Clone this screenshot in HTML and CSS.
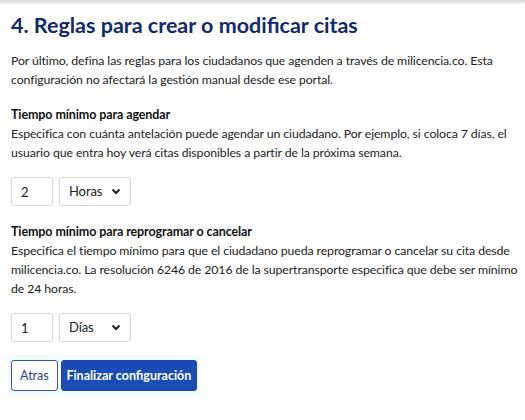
FILE: index.html
```html
<!DOCTYPE html>
<html>
	<head>
		<meta charset="UTF-8">
		<title>Reglas para citas</title>
		<link rel="stylesheet" href="styles.css">
	</head>
	<body>
		<div class="top-bar"></div>
		<div class="container">
			<h2 class="title">4. Reglas para crear o modificar citas</h2>
			<p class="intro">Por último, defina las reglas para los ciudadanos que agenden a través de milicencia.co. Esta configuración no afectará la gestión manual desde ese portal.</p>

			<div class="rule">
				<h3>Tiempo mínimo para agendar</h3>
				<p>Especifica con cuánta antelación puede agendar un ciudadano. Por ejemplo, si coloca 7 días, el usuario que entra hoy verá citas disponibles a partir de la próxima semana.</p>
				<div class="fields">
					<input type="text" class="num" value="2">
					<div class="select">
						<span>Horas</span>
						<svg width="10" height="7" viewBox="0 0 10 7"><path d="M1.5 1.5 L5 5 L8.5 1.5" fill="none" stroke="#222" stroke-width="2"/></svg>
					</div>
				</div>
			</div>

			<div class="rule">
				<h3>Tiempo mínimo para reprogramar o cancelar</h3>
				<p>Especifica el tiempo mínimo para que el ciudadano pueda reprogramar o cancelar su cita desde milicencia.co. La resolución 6246 de 2016 de la supertransporte especifica que debe ser mínimo de 24 horas.</p>
				<div class="fields">
					<input type="text" class="num" value="1">
					<div class="select">
						<span>Días</span>
						<svg width="10" height="7" viewBox="0 0 10 7"><path d="M1.5 1.5 L5 5 L8.5 1.5" fill="none" stroke="#222" stroke-width="2"/></svg>
					</div>
				</div>
			</div>

			<div class="actions">
				<button class="btn btn-back">Atras</button>
				<button class="btn btn-finish">Finalizar configuración</button>
			</div>
		</div>
	</body>
</html>
```

FILE: styles.css
```css
* {
	margin: 0;
	padding: 0;
	box-sizing: border-box;
}
body {
	background-color: #fff;
	font-family: "Lato", "Liberation Sans", sans-serif;
	color: #222;
}
.top-bar {
	height: 4px;
	background: linear-gradient(#d8d8d8, #f4f4f4);
}
.container {
	padding: 8px 5px 0 11px;
}
.title {
	font: bold 21.5px "Lato", sans-serif;
	color: #0f2a6e;
	line-height: 26px;
}
.intro {
	margin-top: 13px;
	font-size: 12.3px;
	letter-spacing: -0.1px;
	line-height: 19px;
}
.rule {
	margin-top: 16px;
	font-size: 12.3px;
	letter-spacing: -0.1px;
	line-height: 19px;
}
.rule h3 {
	font-size: 12.5px;
	font-weight: bold;
	color: #111;
}
.fields {
	display: flex;
	gap: 6px;
	margin-top: 15px;
}
.num {
	width: 42px;
	height: 29px;
	border: 1px solid #ddd8cc;
	border-radius: 3px;
	padding-left: 9px;
	font: 13px "Lato", sans-serif;
	color: #222;
}
.select {
	width: 72px;
	height: 29px;
	border: 1px solid #ddd8cc;
	border-radius: 3px;
	display: flex;
	align-items: center;
	justify-content: space-between;
	padding: 0 9px 0 9px;
	font-size: 13px;
}
.actions {
	display: flex;
	gap: 3px;
	margin-top: 13px;
	margin-left: -3px;
	padding: 5px 3px 5px 3px;
	background: #effdff;
	width: 192px;
}
.btn {
	height: 31px;
	border-radius: 3px;
	font: bold 12.5px "Lato", sans-serif;
	white-space: nowrap;
}
.btn-back {
	width: 47px;
	background: #fff;
	border: 1px solid #3a4fb4;
	color: #2b3f9e;
	font-weight: normal;
}
.btn-finish {
	width: 137px;
	background: #1a4cb6;
	border: 1px solid #2b3ea3;
	color: #fff;
}
```
